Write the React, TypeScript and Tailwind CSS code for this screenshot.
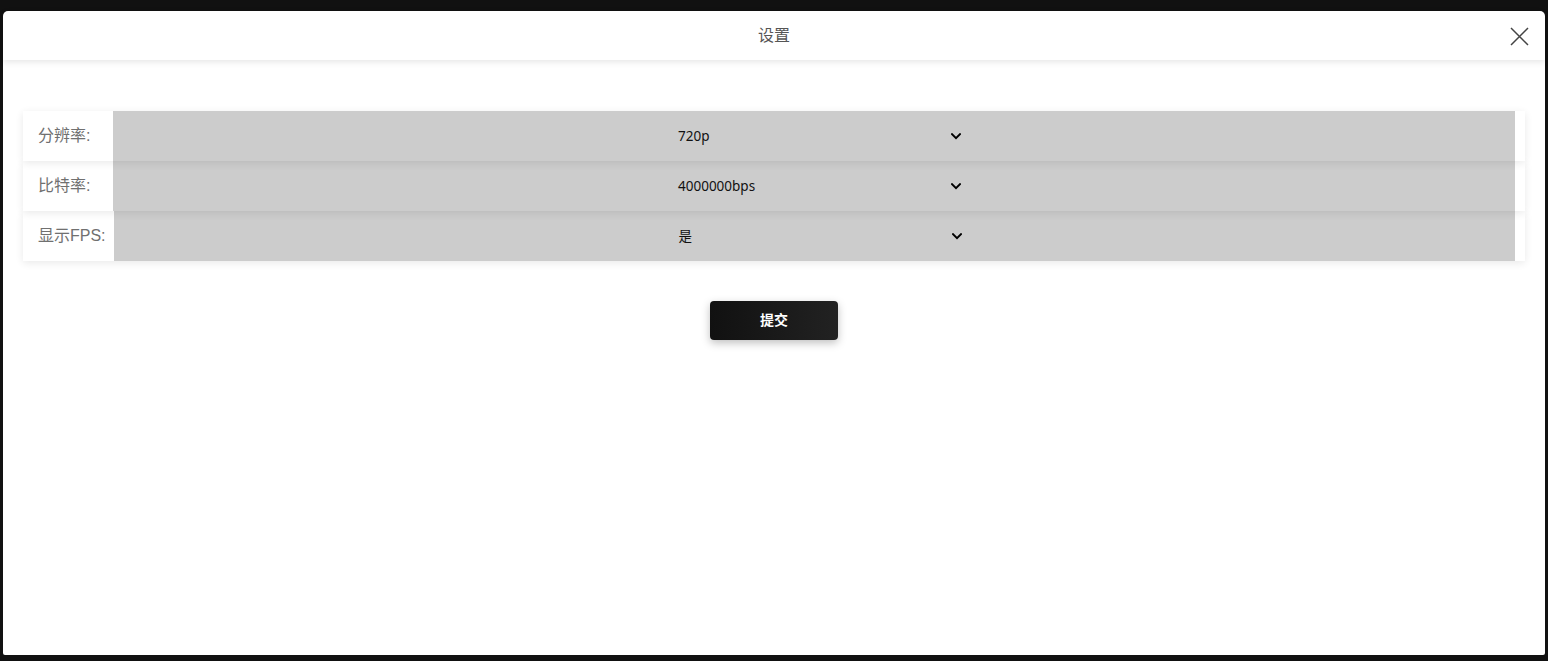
import React from "react";

const rows = [
  { label: "分辨率:", value: "720p", w: "w-[90px]" },
  { label: "比特率:", value: "4000000bps", w: "w-[90px]" },
  { label: "显示FPS:", value: "是", w: "w-[91px]" },
];

function Chevron() {
  return (
    <svg width="10" height="7" viewBox="0 0 10 7" className="shrink-0">
      <path d="M1 1.2 L5 5.2 L9 1.2" fill="none" stroke="#000" strokeWidth="2" strokeLinecap="square" />
    </svg>
  );
}

export default function App() {
  return (
    <div className="min-h-[661px] bg-[#111111] pt-[11px] px-[3px] pb-[6px] flex flex-col">
      <div className="flex-1 bg-white rounded-t-[5px] rounded-b-[2px] flex flex-col">
        <div className="relative z-10 h-[49px] flex items-center justify-center shadow-[0_2px_6px_rgba(0,0,0,0.1)] rounded-t-[5px]">
          <span className="text-[16px] text-[#555] font-['Liberation_Sans','Noto_Sans_CJK_SC',sans-serif]">设置</span>
          <button className="absolute right-[16px] top-[15px] w-[20px] h-[20px] flex items-center justify-center">
            <svg width="19" height="19" viewBox="0 0 19 19">
              <path d="M1 1 L18 18 M18 1 L1 18" stroke="#444" strokeWidth="1.5" fill="none" />
            </svg>
          </button>
        </div>
        <div className="pt-[51px] px-[20px] flex flex-col">
          <div className="flex flex-col">
            {rows.map((r, i) => (
              <div
                key={i}
                className={`relative flex h-[50px] bg-white pr-[10px] shadow-[0_2px_8px_rgba(0,0,0,0.09)] ${
                  i === 0 ? "z-30" : i === 1 ? "z-20" : "z-10"
                }`}
              >
                <div
                  className={`${r.w} shrink-0 flex items-center pl-[15px] text-[16px] text-[#707070] font-['Liberation_Sans','Noto_Sans_CJK_SC',sans-serif]`}
                >
                  {r.label}
                </div>
                <div className="flex-1 bg-[#cccccc] flex items-center justify-center">
                  <div className="w-[300px] flex items-center justify-between pl-[14px] pr-[3px] text-[13.5px] text-[#111] font-['Noto_Sans','Noto_Sans_CJK_SC',sans-serif]">
                    <span>{r.value}</span>
                    <Chevron />
                  </div>
                </div>
              </div>
            ))}
          </div>
          <div className="flex justify-center mt-[40px]">
            <button className="w-[128px] h-[39px] rounded-[4px] bg-gradient-to-r from-[#111111] to-[#222222] text-white text-[14px] font-semibold shadow-[0_3px_8px_rgba(0,0,0,0.25)] font-['Liberation_Sans','Noto_Sans_CJK_SC',sans-serif]">
              提交
            </button>
          </div>
        </div>
      </div>
    </div>
  );
}
